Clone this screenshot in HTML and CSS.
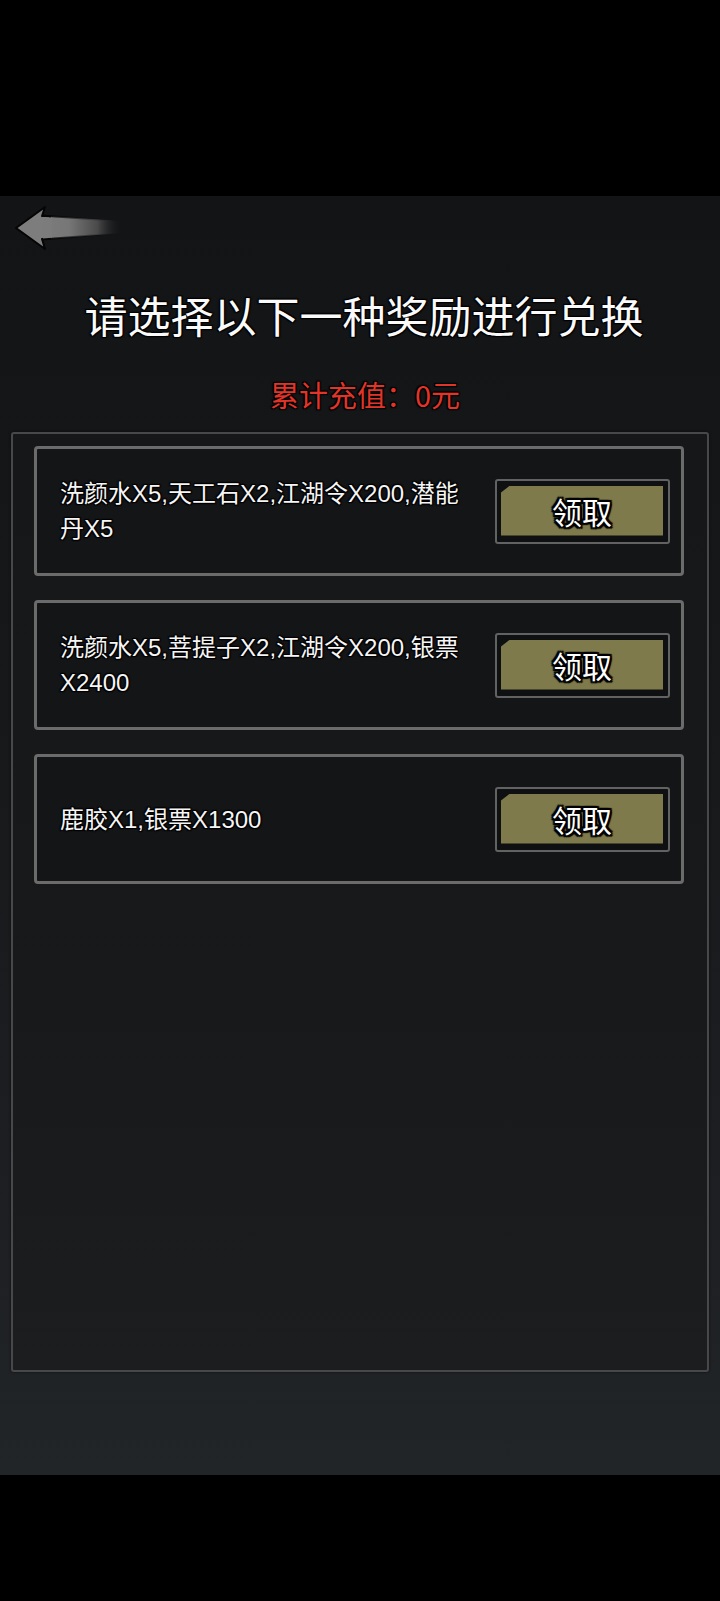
FILE: index.html
```html
<!DOCTYPE html>
<html lang="zh-CN">
<head>
<meta charset="utf-8">
<title>兑换奖励</title>
<link rel="stylesheet" href="styles.css">
</head>
<body>
<div class="screen">
  <div class="status-bar"></div>
  <main class="game">
    <header class="nav">
      <button class="back" aria-label="返回">
        <svg width="130" height="60" viewBox="0 0 130 60">
          <defs>
            <linearGradient id="shaft" x1="40" y1="0" x2="122" y2="0" gradientUnits="userSpaceOnUse">
              <stop offset="0" stop-color="#7c7c7c"/>
              <stop offset="0.35" stop-color="#777777"/>
              <stop offset="0.7" stop-color="#4a4a4b"/>
              <stop offset="1" stop-color="#17181a" stop-opacity="0"/>
            </linearGradient>
            <linearGradient id="edge" x1="40" y1="0" x2="110" y2="0" gradientUnits="userSpaceOnUse">
              <stop offset="0" stop-color="#050505" stop-opacity="1"/>
              <stop offset="1" stop-color="#050505" stop-opacity="0"/>
            </linearGradient>
          </defs>
          <path d="M40,19.5 L122,25 L122,37 L40,43.5 Z" fill="url(#shaft)"/>
          <path d="M42,19.5 L110,24.5 M42,43.5 L110,38" stroke="url(#edge)" stroke-width="2" fill="none"/>
          <path d="M16,32 L45,11 L42,20 L50,20.5 L50,42.5 L42,43 L45,53 Z" fill="#7d7d7d" stroke="#050505" stroke-width="2" stroke-linejoin="round"/>
          <path d="M43,21 L52,21.6 L52,41.8 L43,42.4 Z" fill="#7c7c7c"/>
        </svg>
      </button>
    </header>
    <h1 class="title">请选择以下一种奖励进行兑换</h1>
    <p class="total">累计充值：0元</p>
    <section class="panel">
      <div class="card">
        <p class="reward">洗颜水X5,天工石X2,江湖令X200,潜能<br>丹X5</p>
        <button class="claim"><span class="claim-face">领取</span></button>
      </div>
      <div class="card">
        <p class="reward">洗颜水X5,菩提子X2,江湖令X200,银票<br>X2400</p>
        <button class="claim"><span class="claim-face">领取</span></button>
      </div>
      <div class="card">
        <p class="reward">鹿胶X1,银票X1300</p>
        <button class="claim"><span class="claim-face">领取</span></button>
      </div>
    </section>
  </main>
  <div class="nav-bar"></div>
</div>
</body>
</html>
```
FILE: styles.css
```css
* { box-sizing: border-box; }

html, body {
  margin: 0;
  padding: 0;
  background: #000;
}

body {
  font-family: "Liberation Sans", "Noto Sans CJK SC", sans-serif;
  color: #fff;
}

.screen {
  width: 720px;
  height: 1601px;
  display: flex;
  flex-direction: column;
  overflow: hidden;
}

.status-bar {
  height: 196px;
  flex: none;
  background: #000;
}

.game {
  height: 1279px;
  flex: none;
  background: linear-gradient(180deg, #131416 0%, #17181a 40%, #1d1f22 80%, #222528 100%);
  display: flex;
  flex-direction: column;
}

.nav {
  height: 93px;
  flex: none;
}

.back {
  display: block;
  margin: 0;
  padding: 0;
  border: 0;
  background: transparent;
  width: 130px;
  height: 60px;
}

.back svg { display: block; }

.title {
  margin: 0;
  padding-left: 8px;
  text-align: center;
  font-family: "Noto Sans CJK SC", sans-serif;
  font-weight: 400;
  font-size: 43px;
  line-height: 50px;
  color: #fafafa;
  text-shadow: 0 0 2px #000, 1px 1px 1px #000, -1px -1px 1px #000, 1px -1px 1px #000, -1px 1px 1px #000;
}

.total {
  margin: 37px 0 0;
  padding-left: 10px;
  text-align: center;
  font-family: "Noto Sans CJK SC", sans-serif;
  font-size: 29px;
  line-height: 36px;
  color: #e2352a;
  text-shadow: 0 0 2px #000, 1px 1px 1px #000, -1px -1px 1px #000, 1px -1px 1px #000, -1px 1px 1px #000;
}

.panel {
  margin: 20px 0 0 11px;
  width: 698px;
  height: 940px;
  border: 2px solid #47484a;
  border-radius: 3px;
  background: linear-gradient(180deg, #161719 0%, #18191b 60%, #1c1d1f 100%);
  padding: 12px 23px 0 21px;
  display: flex;
  flex-direction: column;
  gap: 24px;
  box-shadow: 0 0 3px rgba(0, 0, 0, 0.6);
}

.card {
  height: 130px;
  flex: none;
  border: 3px solid #6b6b6c;
  border-radius: 4px;
  background: #141517;
  display: flex;
  align-items: center;
  padding: 0 11px 0 23px;
}

.reward {
  flex: 1;
  margin: 0;
  font-size: 24px;
  line-height: 35px;
  color: #f5f5f5;
  white-space: nowrap;
  text-shadow: 0 0 2px #000, 1px 1px 1px #000, -1px -1px 1px #000, 1px -1px 1px #000, -1px 1px 1px #000;
}

.claim {
  flex: none;
  width: 175px;
  height: 65px;
  margin: 0;
  border: 2px solid #626263;
  border-radius: 3px;
  background: #0f1011;
  padding: 5px 5px 6px 4px;
  display: flex;
  cursor: pointer;
}

.claim-face {
  flex: 1;
  display: flex;
  align-items: center;
  justify-content: center;
  background: #7e7a4b;
  clip-path: polygon(9px 0, 100% 0, 100% 100%, 0 100%, 0 7px);
  font-family: "Noto Sans CJK SC", sans-serif;
  font-size: 30px;
  line-height: 1;
  color: #fff;
  text-shadow: 0 0 2px #000, 2px 2px 1px #000, -2px -2px 1px #000, 2px -2px 1px #000, -2px 2px 1px #000, 0 2px 1px #000, 0 -2px 1px #000, 2px 0 1px #000, -2px 0 1px #000;
}

.nav-bar {
  flex: 1;
  background: #000;
}
```
